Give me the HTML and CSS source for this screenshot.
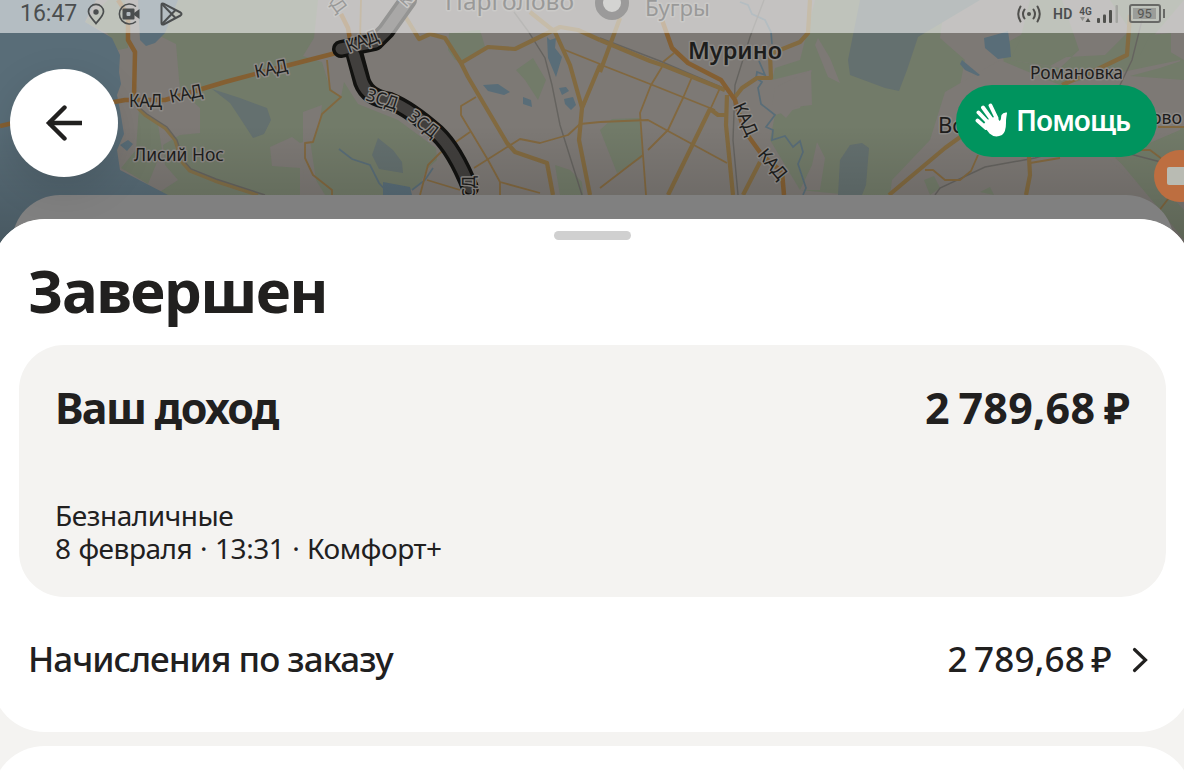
FILE: index.html
```html
<!DOCTYPE html>
<html lang="ru">
<head>
    <meta charset="UTF-8">
    <title>Завершен</title>
    <link rel="stylesheet" href="styles.css">
</head>
<body>
    <!-- Карта -->
    <svg class="map" width="1184" height="250" viewBox="0 0 1184 250">
        <defs>
            <linearGradient id="shade" x1="0" y1="0" x2="0" y2="1">
                <stop offset="0.5" stop-color="#000" stop-opacity="0"/>
                <stop offset="1" stop-color="#000" stop-opacity="0.2"/>
            </linearGradient>
        </defs>
        <rect width="1184" height="250" fill="#7d7975"/>

        <!-- Леса -->
        <g fill="#727b69">
            <path d="M85 22L108 0H125L128 48L118 50L107 33Z"/>
            <path d="M178 0H318L314 38L303 56L322 62L330 88L341 97L344 82L358 104L398 120L436 148L437 160L426 170L420 185L400 195H325L316 180L310 140L300 143L292 137L270 147L272 166L300 168V195H155L178 180L165 165L163 145L180 135L200 133V108L180 90L176 44L160 36Z"/>
            <path d="M139 108L158 124L162 150L148 184L121 168L136 150Z"/>
            <path d="M449 33L480 30L486 50L465 62L455 60L448 50Z"/>
            <path d="M516 70L533 58L546 80L538 100L525 80Z"/>
            <path d="M555 165L570 170L582 182L583 195H560Z"/>
            <path d="M600 130L612 119L640 118L642 158L617 173Z"/>
            <path d="M815 0H1184L1150 40L1184 60V80L1130 75L1120 110L1184 128V195L1150 188L1115 158L1060 155L1000 190L890 195L850 195L800 190L770 140L775 115L800 108L812 70L772 80L775 68L800 60Z"/>
        </g>

        <!-- Застройка -->
        <g fill="#7d7975">
            <path d="M818 38L830 58L840 83L828 77L815 45Z"/>
            <path d="M775 88L800 75L811 70L812 105L795 107L786 118L772 105Z"/>
            <path d="M817 142L825 158L820 190H800L812 165Z"/>
            <path d="M945 0H1110L1130 30L1105 55L1010 60L1060 68L1079 50L1030 30L1002 45L1005 75L985 95L960 85L965 60L940 38Z"/>
            <path d="M890 195L892 180L930 140L945 92L1000 60L1060 85L1180 60V130L1110 160L1150 195Z"/>
            <path d="M303 112L322 105L320 120L312 142L305 150L303 180Z"/>
        </g>
        <g fill="#727b69">
            <path d="M1030 0H1062L1079 50L1050 66L1010 60L1020 40Z"/>
            <path d="M1140 55L1150 35L1171 33V55Z"/>
            <path d="M1130 76L1160 68L1184 60V80Z"/>
            <path d="M1115 156L1145 160L1170 195L1184 210V240L1160 210Z"/>
            <path d="M924 180L934 176L940 188L930 195Z"/>
            <path d="M980 192L990 187L994 195Z"/>
        </g>

        <!-- Вода -->
        <g fill="#596d78">
            <path d="M0 0H96L85 22L112 38L120 55L119 72L121 84L117 95L120 110L124 134L117 150L120 170L168 195V250H0Z"/>
            <path d="M138 0H178L165 33L155 43L146 46L140 40Z"/>
            <path d="M120 145L128 140L133 144L127 151Z"/>
            <path d="M383 182L410 187L412 195H383Z"/>
            <path d="M547 37L550 40L556 38L555 48L562 57L556 77L548 58Z"/>
            <path d="M483 85L498 84L510 92L504 95L488 91Z"/>
            <path d="M523 97L531 100L532 107L523 104Z"/>
            <path d="M559 88L566 87L569 91L562 95Z"/>
            <path d="M564 99L573 97L576 105L571 110L565 104Z"/>
            <path d="M1002 33L1008 31L1010 45L1011 57L998 59L985 48L984 38Z"/>
            <path d="M962 60L980 75L978 76L965 70L960 64Z"/>
        </g>
        <g fill="#64706f">
            <path d="M212 89L240 98L267 108L271 120L264 134L253 138L240 118L230 103Z"/>
            <path d="M378 138L393 150L402 162L403 173L379 169L372 155Z"/>
            <path d="M838 195L840 160L850 145L862 143L869 148L866 185L862 195Z"/>
            <path d="M860 0H980L918 37L907 70L899 91L885 88L850 75L848 60Z"/>
        </g>
        <g fill="none" stroke="#596d78" stroke-width="1.7">
            <path d="M339 149L352 159L370 165L379 183L390 195M412 190L425 180L433 168"/>
            <path d="M740 2L748 5L752 14L765 20L771 32L772 44M759 61L765 75L757 72L756 78L762 82L758 88L761 104L775 115L766 127L773 130L772 140L785 136L793 147L800 141L803 152L798 164L806 188L803 195"/>
        </g>

        <!-- Железная дорога -->
        <g class="rail">
            <path d="M514 12L528 31L545 58L552 85L560 125L582 195"/>
            <path d="M600 38L660 61L730 91M764 0L750 37L735 85L733 140L738 195"/>
            <path d="M1142 20L1132 60L1120 85M935 195L940 188L985 167L1035 158L1045 155M1130 154L1184 168"/>
        </g>

        <!-- Малые дороги -->
        <g class="road">
            <path d="M327 60L330 90L341 97L322 114L313 142L305 143L305 158L313 175L332 190V195M361 0L360 40"/>
            <path d="M420 195L428 165L440 153L470 132M427 180L460 190M476 97L461 106V115L488 160L500 182V195M474 168L520 139L540 143L568 135L580 124L600 122M500 182L540 193"/>
            <path d="M565 50L600 64L592 85L583 108"/>
            <path d="M604 66L650 84L715 110M662 67L651 85L640 113L643 155L646 195M643 155L600 188M600 122L648 120L668 131L727 163M692 77L683 98L668 130L648 150M720 88L710 110M663 62L674 53"/>
            <path d="M925 170L933 170L945 180L960 180L971 171L978 155M1030 163L1060 158M1125 150H1150L1170 165M1158 127H1184M1184 175L1175 190L1158 212"/>
        </g>

        <!-- Главные дороги -->
        <g class="road road-main">
            <path d="M405 16L419 39L430 34L445 38L461 63L468 77L507 143L515 152L547 163L553 195"/>
            <path d="M461 63L488 47L515 49L560 27L578 30L600 40M530 12L555 32L570 65L582 108L579 140L590 195M600 65L582 108"/>
            <path d="M600 72L620 18M600 40L650 61L665 66L725 90M810 0L808 33L800 42L770 54L771 78L757 78L742 88L735 97M727 95L726 125L733 195M710 109L668 195M710 109L718 115H727M760 162L743 195"/>
            <path d="M889 195L945 148L970 130M1029 157L1030 175L1026 195M1130 15L1127 55L1100 68L1062 85"/>
        </g>
        <g class="road road-ring">
            <path d="M0 126L60 112L125 100L165 100L225 82L270 70L340 52"/>
            <path d="M118 0L128 15V40L135 52L134 98M341 14L348 28L351 45"/>
            <path d="M662 20L672 48L688 63L721 80L735 100L744 130L762 155L782 172L784 195"/>
        </g>
        <path d="M138 108L145 115L165 128L175 140L182 162L190 171L215 181L258 195" class="road road-old"/>
        <path d="M140 108L147 114L167 127L177 140L184 161L191 169L216 179L265 195" class="rail"/>

        <!-- ЗСД -->
        <g fill="none" stroke-linecap="round" stroke-linejoin="round">
            <path d="M341 49L375 42L386 31L408 0" stroke="#121210" stroke-width="18"/>
            <path d="M354 52L362 82Q368 98 390 101Q410 109 437 133Q455 150 470 188" stroke="#121210" stroke-width="18"/>
            <path d="M341 49L375 42L386 31L408 0" stroke="#413f3d" stroke-width="11"/>
            <path d="M354 55L362 82Q368 98 390 101Q410 109 437 133Q455 150 470 188" stroke="#413f3d" stroke-width="11"/>
        </g>

        <circle cx="612" cy="3" r="13" fill="#a0a09c" stroke="#22211f" stroke-width="8"/>

        <!-- Подписи -->
        <g class="labels">
            <text x="129" y="107" textLength="33" lengthAdjust="spacingAndGlyphs">КАД</text>
            <text x="171" y="103" textLength="33" lengthAdjust="spacingAndGlyphs" transform="rotate(-12 171 103)">КАД</text>
            <text x="256" y="78" textLength="33" lengthAdjust="spacingAndGlyphs" transform="rotate(-12 256 78)">КАД</text>
            <text x="349" y="53" textLength="33" lengthAdjust="spacingAndGlyphs" transform="rotate(-22 349 53)">КАД</text>
            <text x="365" y="100" textLength="32" lengthAdjust="spacingAndGlyphs" transform="rotate(18 365 100)">ЗСД</text>
            <text x="407" y="119" textLength="32" lengthAdjust="spacingAndGlyphs" transform="rotate(38 407 119)">ЗСД</text>
            <text x="475" y="208" textLength="32" lengthAdjust="spacingAndGlyphs" transform="rotate(-90 475 208)">ЗСД</text>
            <text x="318" y="-12" textLength="33" lengthAdjust="spacingAndGlyphs" transform="rotate(53 318 -12)">КАД</text>
            <text x="406" y="8" textLength="33" lengthAdjust="spacingAndGlyphs" transform="rotate(-48 406 8)">КАД</text>
            <text x="733" y="106" textLength="34" lengthAdjust="spacingAndGlyphs" transform="rotate(66 733 106)">КАД</text>
            <text x="757" y="155" textLength="34" lengthAdjust="spacingAndGlyphs" transform="rotate(50 757 155)">КАД</text>
            <text x="134" y="161" textLength="90" lengthAdjust="spacingAndGlyphs">Лисий Нос</text>
            <text x="1030" y="79" textLength="93" lengthAdjust="spacingAndGlyphs">Романовка</text>
            <text x="938" y="133" class="label-mid">Вс</text>
            <text x="1151" y="124" textLength="31" lengthAdjust="spacingAndGlyphs">ово</text>
            <text x="688" y="59" textLength="94" lengthAdjust="spacingAndGlyphs" class="label-big">Мурино</text>
            <text x="445" y="10" textLength="129" lengthAdjust="spacingAndGlyphs" class="label-large">Парголово</text>
            <text x="645" y="16" textLength="65" lengthAdjust="spacingAndGlyphs" class="label-mid">Бугры</text>
        </g>
        <rect width="1184" height="250" fill="url(#shade)"/>
    </svg>

    <!-- Строка состояния -->
    <header class="status-bar">
        <div class="status-left">
            <span class="time">16:47</span>
            <svg width="18" height="22" viewBox="0 0 18 22" fill="none" stroke="#4b4e4f" stroke-width="1.7">
                <path d="M9 20.5C6 16.5 1.500 12.800 1.500 8.600A7.500 7.200 0 0 1 16.500 8.600C16.500 12.800 12 16.500 9 20.500Z"/>
                <circle cx="9" cy="9" r="2.700" fill="#4b4e4f" stroke="none"/>
            </svg>
            <svg width="22" height="22" viewBox="0 0 22 22">
                <path d="M18 3.500A10 10 0 1 0 18 18.500" fill="none" stroke="#4b4e4f" stroke-width="1.600"/>
                <rect x="4.500" y="5.500" width="12" height="11" rx="1" fill="#4b4e4f"/>
                <path d="M16 10L21.500 6V16L16 12Z" fill="#4b4e4f"/>
                <rect x="8.500" y="9" width="4" height="4" rx="1" fill="#b2bac0"/>
            </svg>
            <svg class="play" width="23" height="24" viewBox="0 0 23 24" fill="none" stroke="#4b4e4f" stroke-width="2" stroke-linejoin="round">
                <path d="M1.500 3Q1.500 1 3.500 1.600L20.500 10.500Q22.500 12 20.500 13.500L3.500 22.500Q1.500 23 1.500 21Z"/>
                <path d="M2 2L15.500 16M2 22L15.500 8"/>
            </svg>
        </div>
        <div class="status-right">
            <svg class="hotspot" width="24" height="18" viewBox="0 0 24 18" fill="none" stroke="#50504d" stroke-width="2" stroke-linecap="round">
                <circle cx="12" cy="9" r="2" fill="#50504d" stroke="none"/>
                <path d="M7.500 4.500Q4.500 9 7.500 13.500M3.500 1.500Q-1 9 3.500 16.500M16.500 4.500Q19.500 9 16.500 13.500M20.500 1.500Q25 9 20.500 16.500"/>
            </svg>
            <span class="hd">HD</span>
            <span class="network">4G
                <svg width="11" height="5" viewBox="0 0 11 5">
                    <path d="M0 0H5L2.500 4Z" fill="#92928e"/>
                    <path d="M5.500 5L8 1L10.500 5Z" fill="#50504d"/>
                </svg>
            </span>
            <svg class="signal" width="22" height="18" viewBox="0 0 22 18" fill="#50504d">
                <rect x="0" y="13" width="3" height="5" rx="1"/>
                <rect x="6" y="9.500" width="3" height="8.500" rx="1"/>
                <rect x="12" y="5" width="3" height="13" rx="1"/>
                <rect x="18.500" y="0" width="2.500" height="18" rx="1" fill="#a4a5a1"/>
            </svg>
            <div class="battery"><span>95</span></div>
        </div>
    </header>

    <!-- Кнопки поверх карты -->
    <div class="map-actions">
        <button class="back" aria-label="Назад">
            <svg width="38" height="36" viewBox="0 0 38 36" fill="none" stroke="#21201f" stroke-width="4.400">
                <path d="M3 18H37" />
                <path d="M19.500 2.500L4 18L19.500 33.500" stroke-linecap="round"/>
            </svg>
        </button>
        <button class="help">
            <svg width="33" height="34" viewBox="0 0 33 34">
                <g stroke="#fff" stroke-width="3.900" stroke-linecap="round" fill="none">
                    <path d="M2.500 17.500L11 25M3.500 9.500L14 20.500M8 4.500L17 17M15.500 2.500L21.500 15"/>
                </g>
                <path d="M8 22L12 17L21.500 13L24.500 18C26.500 17 25.800 14 26.500 12Q28 9 32 9.500C32 12 31 14 31 20Q31 29 27 32Q20 35.500 14.500 30.500Z" fill="#fff"/>
            </svg>
            <span>Помощь</span>
        </button>
    </div>
    <div class="recorder"><i></i></div>

    <!-- Шторка с заказом -->
    <div class="sheet-back"></div>
    <main class="sheet">
        <section class="card">
            <div class="handle"></div>
            <h1>Завершен</h1>
            <div class="income">
                <div class="income-top">
                    <span class="income-title">Ваш доход</span>
                    <span class="income-sum">2 789,68 ₽</span>
                </div>
                <p class="pay-type">Безналичные</p>
                <p class="details">8 февраля · 13:31 · Комфорт+</p>
            </div>
            <div class="accruals">
                <span class="accruals-title">Начисления по заказу</span>
                <span class="accruals-sum">2 789,68 ₽</span>
                <svg width="16" height="26" viewBox="0 0 16 26" fill="none" stroke="#21201f" stroke-width="3.200" stroke-linecap="round">
                    <path d="M2.500 2.500L13.500 13L2.500 23.500"/>
                </svg>
            </div>
        </section>
        <section class="card card-next"></section>
    </main>
</body>
</html>
```
FILE: styles.css
```css
* {
    box-sizing: border-box;
}
body {
    margin: 0;
    width: 1184px;
    height: 784px;
    overflow: hidden;
    position: relative;
    display: flex;
    flex-direction: column;
    font-family: "Noto Sans", sans-serif;
    color: #21201f;
    background: #7d7975;
}

/* Карта */
.map {
    position: absolute;
    left: 0;
    top: 0;
}
.road {
    fill: none;
    stroke: #82683f;
    stroke-width: 1.8;
    stroke-linejoin: round;
}
.road-main {
    stroke: #826a40;
    stroke-width: 4.2;
}
.road-ring {
    stroke: #845f32;
    stroke-width: 4.5;
}
.road-old {
    stroke: #826f48;
    stroke-width: 3.5;
}
.rail {
    fill: none;
    stroke: #65635f;
    stroke-width: 1.4;
}
.labels {
    font-size: 18px;
    fill: #1d1d1c;
    stroke: #8c8986;
    stroke-width: 3px;
    stroke-linejoin: round;
    paint-order: stroke;
}
.label-mid {
    font-size: 22px;
}
.label-large {
    font-size: 24px;
}
.label-big {
    font-size: 24px;
    font-weight: 600;
}

/* Строка состояния */
.status-bar {
    position: relative;
    flex: none;
    height: 33px;
    padding: 0 19px 6px 20px;
    display: flex;
    justify-content: space-between;
    align-items: center;
    background: rgba(255, 255, 255, 0.55);
    color: #4b4e4f;
}
.status-left,
.status-right {
    display: flex;
    align-items: center;
}
.status-right {
    position: relative;
    left: -1px;
}
.time {
    width: 67px;
    font-family: Roboto, sans-serif;
    font-size: 23px;
    line-height: 27px;
}
.status-left svg {
    margin-right: 13px;
}
.status-left .play {
    margin-left: 7px;
}
.hd {
    width: 26px;
    margin-left: 12px;
    font-family: Roboto, sans-serif;
    font-size: 14px;
    font-weight: 600;
    letter-spacing: 0.3px;
}
.network {
    display: flex;
    flex-direction: column;
    align-items: center;
    width: 13px;
    font-family: Roboto, sans-serif;
    font-size: 10px;
    font-weight: 600;
    line-height: 11px;
}
.signal {
    margin-left: 5px;
}
.battery {
    position: relative;
    width: 32px;
    height: 19px;
    margin: 0 3px 0 10px;
    padding: 2px;
    border: 2px solid #686966;
    border-radius: 3px;
    display: flex;
}
.battery span {
    width: 23px;
    background: #9b9d99;
    color: #555653;
    font-family: Roboto, sans-serif;
    font-size: 13px;
    line-height: 12px;
    text-align: center;
}
.battery::after {
    content: "";
    position: absolute;
    right: -6px;
    top: 3px;
    width: 2px;
    height: 9px;
    background: #686966;
}

/* Кнопки */
.map-actions {
    position: relative;
    flex: none;
    height: 186px;
    padding: 36px 27px 0 10px;
    display: flex;
    justify-content: space-between;
    align-items: flex-start;
    z-index: 1;
}
.back {
    width: 108px;
    height: 108px;
    padding: 0;
    border: 0;
    border-radius: 50%;
    background: #fff;
    display: flex;
    justify-content: center;
    align-items: center;
    box-shadow: 0 12px 40px rgba(0, 0, 0, 0.12);
}
.help {
    width: 201px;
    height: 72px;
    margin-top: 16px;
    padding: 0 0 2px 19px;
    border: 0;
    border-radius: 36px;
    background: #00945e;
    color: #fff;
    display: flex;
    align-items: center;
    gap: 8px;
    font-family: "Noto Sans", sans-serif;
    font-size: 28px;
    font-weight: 600;
    letter-spacing: -1px;
    white-space: nowrap;
}
.recorder {
    position: absolute;
    right: -22px;
    top: 150px;
    width: 52px;
    height: 52px;
    padding: 17px 0 0 13px;
    border-radius: 50%;
    background: #bd6e40;
}
.recorder i {
    display: block;
    width: 30px;
    height: 18px;
    border-radius: 2px;
    background: #b9bbb3;
}

/* Шторка */
.sheet-back {
    position: absolute;
    left: 12px;
    right: 10px;
    top: 195px;
    height: 100px;
    border-radius: 48px 48px 0 0;
    background: #808080;
}
.sheet {
    position: relative;
    flex: 1;
    min-height: 0;
    margin: 0 -9px;
    border-radius: 54px 54px 0 0;
    background: #f4f3f1;
    z-index: 1;
    display: flex;
    flex-direction: column;
    gap: 14px;
    overflow: hidden;
}
.card {
    height: 513px;
    flex: none;
    padding: 12px 27px 0 28px;
    border-radius: 54px;
    background: #fff;
}
.card-next {
    height: 120px;
}
.handle {
    width: 77px;
    height: 9px;
    margin: 0 auto;
    border-radius: 5px;
    background: #d0d0d0;
}
h1 {
    margin: 10px 0 0 9px;
    font-size: 60px;
    font-weight: 700;
    line-height: 80px;
    letter-spacing: -1.6px;
    white-space: nowrap;
}
.income {
    height: 252px;
    margin-top: 15px;
    padding: 36px 36px 0;
    border-radius: 45px;
    background: #f4f3f1;
}
.income-top {
    display: flex;
    justify-content: space-between;
    font-size: 43px;
    font-weight: 700;
    line-height: 53px;
    white-space: nowrap;
}
.income-title {
    letter-spacing: -1.6px;
}
.income-sum {
    letter-spacing: 0.3px;
    word-spacing: -3px;
}
.pay-type,
.details {
    margin: 0;
    font-size: 28px;
    line-height: 33px;
    letter-spacing: -0.45px;
    white-space: nowrap;
}
.pay-type {
    margin-top: 65px;
}
.details {
    word-spacing: 1px;
}
.accruals {
    height: 126px;
    padding: 0 18px 0 9px;
    display: flex;
    align-items: center;
    font-size: 35px;
    font-weight: 500;
    white-space: nowrap;
}
.accruals-title,
.accruals-sum {
    padding-bottom: 3px;
}
.accruals-title {
    letter-spacing: -1px;
}
.accruals-sum {
    margin: 0 20px 0 auto;
    letter-spacing: 0.2px;
    word-spacing: -3px;
}
```
